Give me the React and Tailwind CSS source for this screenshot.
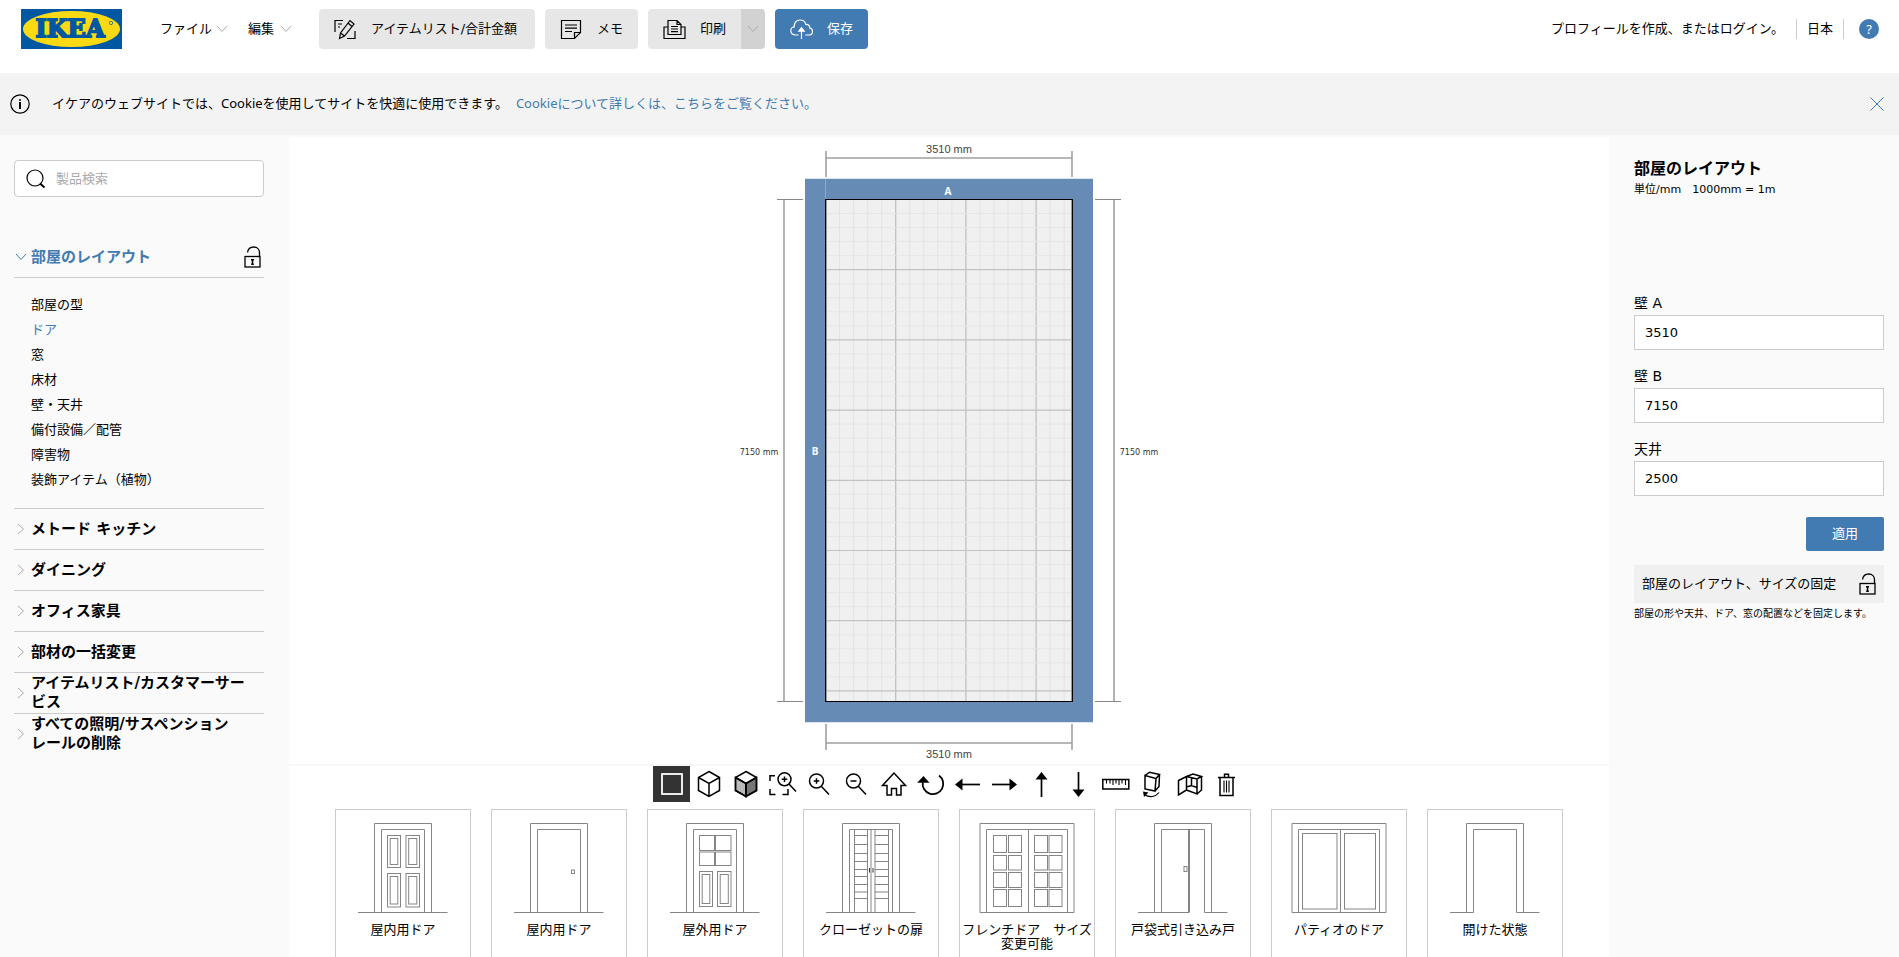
import React from 'react';

const BODY_FONT = "font-['DejaVu_Sans','Noto_Sans_CJK_JP',sans-serif]";

function Chevron({ dir = 'down', className = '' }) {
  const d = dir === 'down' ? 'M1 3 6 8.5 11 3' : 'M3 1 8.5 6 3 11';
  return (
    <svg viewBox="0 0 12 12" className={`size-3 shrink-0 ${className}`} fill="none" stroke="currentColor" aria-hidden="true">
      <path d={d} />
    </svg>
  );
}

function Logo() {
  return (
    <svg viewBox="0 0 101 40" className="h-10 w-[101px]" role="img" aria-label="IKEA">
      <rect width="101" height="40" fill="#0058a3" />
      <ellipse cx="50.500" cy="20" rx="48.500" ry="18" fill="#fbd914" />
      <text
        x="49"
        y="28"
        textAnchor="middle"
        fill="#0058a3"
        stroke="#0058a3"
        strokeWidth="1.800"
        className="font-['DejaVu_Serif',serif] text-[24px] font-bold"
      >
        IKEA
      </text>
      <circle cx="90" cy="14" r="1.700" fill="none" stroke="#0058a3" strokeWidth="0.700" />
    </svg>
  );
}

function Lock() {
  return (
    <svg viewBox="0 0 17 22" className="h-[22px] w-[17px] shrink-0" fill="none" stroke="#000" strokeWidth="1.300" aria-hidden="true">
      <rect x="1" y="10.500" width="15" height="10.500" />
      <path d="M3.500 6.500C4 3 6.500 1 9.700 1 13.200 1 15.500 3.500 15.500 6.500V10.500" />
      <path d="M8.500 13.200v5.300M7 13.700h3M7.200 18.300h2.600" strokeWidth="1.500" />
    </svg>
  );
}

const headerIcons = {
  list: (
    <>
      <path d="M1 13V1.500h8M4 5h4M4 8h2" />
      <path d="M5.500 19.500 6.500 14 16 1.500 20 5 10.500 17zM6.500 14l4 3M14 4l4 3.500" />
      <path d="M13 19.500h8V12" />
    </>
  ),
  memo: (
    <>
      <path d="M1.500 1.500h19v12l-6 6h-13z" />
      <path d="M14.500 19.500v-6h6M5 6h12M5 9.200h12M5 12.500h7" />
    </>
  ),
  print: (
    <>
      <path d="M5 8H1v11.500h21V8h-4" />
      <path d="M5 15.500V1.500h9l4 4v10zM14 1.500v4h4M8 7.500h7M8 10h7M8 12.700h7" />
    </>
  ),
  save: (
    <>
      <path d="M8.500 16H5.500C2.500 16 .8 14 .8 11.700S2.500 7.800 4.300 7.800C4 4 6.500 1 10 1c3 0 5.300 2 5.800 4.500 2.700-.3 4 1.300 3.900 3.300 1.600.4 2.800 1.600 2.800 3.400 0 2.300-1.500 3.800-3.700 3.800h-3.500" />
      <path d="M11.500 20V9.500M8.800 12.200l2.700-3.400 2.700 3.400z" fill="currentColor" />
    </>
  ),
};

function HeaderIcon({ name }) {
  return (
    <svg viewBox="0 0 23 21" className="h-[21px] w-[23px] shrink-0" fill="none" stroke="currentColor" strokeWidth="1.200" aria-hidden="true">
      {headerIcons[name]}
    </svg>
  );
}

function HeaderButton({ icon, label, className }) {
  return (
    <button type="button" className={`flex h-10 items-center gap-3.5 px-[15px] ${className}`}>
      <HeaderIcon name={icon} />
      {label}
    </button>
  );
}

function Header() {
  return (
    <header className="flex h-[73px] shrink-0 items-start bg-white pt-[9px] pr-5 pl-[21px] text-[13px]">
      <a href="#home">
        <Logo />
      </a>
      <nav className="ml-[38px] flex h-10 items-center gap-5">
        <button type="button" className="flex items-center gap-1">
          ファイル
          <Chevron className="text-[#aaa]" />
        </button>
        <button type="button" className="flex items-center gap-1.5">
          編集
          <Chevron className="text-[#aaa]" />
        </button>
      </nav>
      <div className="ml-[27px] flex gap-2.5">
        <HeaderButton icon="list" label="アイテムリスト/合計金額" className="min-w-[216px] rounded-sm bg-[#e7e7e7]" />
        <HeaderButton icon="memo" label="メモ" className="rounded-sm bg-[#e7e7e7]" />
        <div className="flex">
          <HeaderButton icon="print" label="印刷" className="rounded-l-sm bg-[#e7e7e7]" />
          <button type="button" aria-label="印刷オプション" className="grid w-6 place-items-center rounded-r-sm bg-[#d2d2d2] text-[#aaa]">
            <Chevron />
          </button>
        </div>
        <HeaderButton icon="save" label="保存" className="rounded-sm bg-[#427ab2] text-white" />
      </div>
      <div className="ml-auto flex h-10 items-center">
        <a href="#login">プロフィールを作成、またはログイン。</a>
        <a href="#country" className="ml-3 border-x border-[#ccc] px-2.5">
          日本
        </a>
        <button
          type="button"
          aria-label="ヘルプ"
          className="ml-[15px] grid size-5 place-items-center rounded-full bg-[#427ab2] font-['Noto_Sans',sans-serif] text-[13px] leading-5 text-white"
        >
          ?
        </button>
      </div>
    </header>
  );
}

function CookieBanner() {
  return (
    <div className="flex h-16 shrink-0 items-center border-b-2 border-[#fafafa] bg-[#f3f3f3] pr-[15px] pl-2.5 font-['Noto_Sans','Noto_Sans_CJK_JP',sans-serif] text-[13px]">
      <svg viewBox="0 0 20 20" className="size-5" fill="none" stroke="#000" strokeWidth="1.200" aria-hidden="true">
        <circle cx="10" cy="10" r="9.200" />
        <path d="M10 5.200v1.600M10 8v7" strokeWidth="1.900" />
      </svg>
      <p className="ml-[22px]">
        イケアのウェブサイトでは、Cookieを使用してサイトを快適に使用できます。
        <a href="#cookies" className="ml-2 text-[#427ab2]">
          Cookieについて詳しくは、こちらをご覧ください。
        </a>
      </p>
      <button type="button" aria-label="閉じる" className="ml-auto text-[#427ab2]">
        <svg viewBox="0 0 14 14" className="size-3.5" stroke="currentColor" aria-hidden="true">
          <path d="M.5.5l13 13M13.500.5l-13 13" />
        </svg>
      </button>
    </div>
  );
}

const roomItems = ['部屋の型', 'ドア', '窓', '床材', '壁・天井', '備付設備／配管', '障害物', '装飾アイテム（植物）'];
const categories = [
  'メトード キッチン',
  'ダイニング',
  'オフィス家具',
  '部材の一括変更',
  'アイテムリスト/カスタマーサービス',
  'すべての照明/サスペンション\nレールの削除',
];

function Sidebar() {
  return (
    <aside className="w-[289px] shrink-0 bg-[#fafafa] pt-[23px] pr-[25px] pl-3.5">
      <label className="flex h-[37px] items-center gap-2.5 rounded-sm border border-[#ccc] bg-white pl-[11px]">
        <svg viewBox="0 0 20 20" className="size-5 shrink-0" fill="none" stroke="#000" aria-hidden="true">
          <circle cx="9" cy="9" r="8" strokeWidth="1.200" />
          <path d="M14 14.500 18.500 18.500" strokeWidth="2" />
        </svg>
        <input type="text" aria-label="製品検索" placeholder="製品検索" className="min-w-0 flex-1 text-[13px] outline-none placeholder:text-[#aaa]" />
      </label>

      <div className="mt-10 flex h-[41px] items-center border-b border-[#ccc] pr-[3px] text-[#427ab2]">
        <Chevron className="ml-px" />
        <button type="button" className="ml-1 text-[15px] font-bold">
          部屋のレイアウト
        </button>
        <span className="ml-auto">
          <Lock />
        </span>
      </div>
      <ul className="pt-3.5 pb-4 pl-[17px] text-[13px] leading-[25px]">
        {roomItems.map((item) => (
          <li key={item}>
            <a href="#room" className={item === 'ドア' ? 'text-[#427ab2]' : ''}>
              {item}
            </a>
          </li>
        ))}
      </ul>
      <ul>
        {categories.map((item) => (
          <li key={item} className="h-[41px] border-t border-[#ccc]">
            <button type="button" className="flex h-full w-full items-center gap-1 pr-3 pl-px text-left text-[15px] leading-[19px] font-bold">
              <Chevron dir="right" className="text-[#aaa]" />
              <span className="whitespace-pre-line">{item}</span>
            </button>
          </li>
        ))}
      </ul>
    </aside>
  );
}

const range = (n) => Array.from({ length: n }, (_, i) => i + 1);

function FloorPlan() {
  const step = 14.04;
  const x0 = 86.5;
  const y0 = 59.5;
  return (
    <svg viewBox="0 0 420 624" className="h-[624px] w-[420px]" role="img" aria-label="部屋の平面図 3510 × 7150 mm">
      <rect x="66" y="38" width="288" height="545" fill="#dbe4ee" />
      <rect x="66" y="39" width="288" height="543" fill="#668cb5" />
      <path d="M86.500 39v20" stroke="#8ba8c8" />
      <rect x="86.500" y="59.500" width="247" height="502" fill="#f0f0f0" />
      <g fill="none">
        {range(17).map((i) => (
          <path key={`v${i}`} d={`M${x0 + i * step} 60V561`} stroke={i % 5 ? '#e3e3e3' : '#bdbdbd'} strokeWidth={i % 5 ? 1 : 1.2} />
        ))}
        {range(35).map((i) => (
          <path key={`h${i}`} d={`M87 ${y0 + i * step}H333`} stroke={i % 5 ? '#e6e6e6' : '#c2c2c2'} strokeWidth={i % 5 ? 1 : 1.2} />
        ))}
      </g>
      <rect x="86.500" y="59.500" width="247" height="502" fill="none" stroke="#000" />
      <path d="M87.500 60v501M332.500 60v501" stroke="#999" />
      <g stroke="#a0a0a0" strokeWidth="1.600" fill="none">
        <path d="M87 11v26M333 11v26M87 18h246" />
        <path d="M87 584v26M333 584v26M87 603h246" />
        <path d="M45 60v501M375 60v501" />
      </g>
      <path d="M38 59.500h26M38 561.500h26M356 59.500h26M356 561.500h26" stroke="#888" />
      <g className="font-['Liberation_Sans',sans-serif] text-[11px]" fill="#444" textAnchor="middle">
        <text x="210" y="13">3510 mm</text>
        <text x="210" y="618">3510 mm</text>
      </g>
      <g className="font-['DejaVu_Sans',sans-serif] text-[8px]" fill="#333" textAnchor="middle">
        <text x="20" y="315">7150 mm</text>
        <text x="400" y="315">7150 mm</text>
      </g>
      <g className="font-['Noto_Sans',sans-serif] text-[10px] font-bold" fill="#fff" textAnchor="middle">
        <text x="209" y="55">A</text>
        <text x="76" y="315">B</text>
      </g>
    </svg>
  );
}

const tools = [
  ['2D', <rect x="4" y="4" width="20" height="20" stroke="#fff" strokeWidth="1.800" />],
  [
    '3D ワイヤー',
    <path d="M14 1.500 24.500 7.500V20.500L14 26.500 3.500 20.500V7.500zM3.500 7.500 14 13.500 24.500 7.500M14 13.500V26.500" />,
  ],
  [
    '3D',
    <>
      <path d="M3.500 7.500 14 13.500V26.500L3.500 20.500z" fill="#bbb" />
      <path d="M24.500 7.500 14 13.500V26.500L24.500 20.500z" fill="#777" />
      <path d="M14 1.500 24.500 7.500V20.500L14 26.500 3.500 20.500V7.500zM3.500 7.500 14 13.500 24.500 7.500M14 13.500V26.500" />
    </>,
  ],
  [
    '範囲ズーム',
    <>
      <circle cx="15.500" cy="9.300" r="6.500" />
      <path d="M20 14 27 21.500M15.500 6.500v5.600M12.700 9.300h5.600M1 11V5.700h5M1 19v5.500h5.500M13.500 24.500h5.500V19" />
    </>,
  ],
  [
    'ズームイン',
    <>
      <circle cx="10.500" cy="11" r="7" />
      <path d="M15.500 16.500 23 24.500M10.500 8.200v5.600M7.700 11h5.600" />
    </>,
  ],
  [
    'ズームアウト',
    <>
      <circle cx="10.500" cy="11" r="7" />
      <path d="M15.500 16.500 23 24.500M7.500 11h6" />
    </>,
  ],
  ['ホーム', <path d="M14 3 2.500 15.500H7V25h4.500v-6.500h5V25H21V15.500h4.500z" />],
  [
    '回転',
    <>
      <path d="M22 5.500A10.300 10.300 0 1 1 5.800 12" strokeWidth="1.800" />
      <path d="M.2 12.700 6.500 6l6 6.700z" fill="#000" stroke="none" />
    </>,
  ],
  [
    '左へ',
    <>
      <path d="M8 14.500h18" strokeWidth="1.700" />
      <path d="M1 14.500 8.500 8.500v12z" fill="#000" stroke="none" />
    </>,
  ],
  [
    '右へ',
    <>
      <path d="M1 14.500H20" strokeWidth="1.700" />
      <path d="M26 14.500 18.500 8.500v12z" fill="#000" stroke="none" />
    </>,
  ],
  [
    '上へ',
    <>
      <path d="M13.500 8v19" strokeWidth="1.700" />
      <path d="M13.500 2 19.500 9.500h-12z" fill="#000" stroke="none" />
    </>,
  ],
  [
    '下へ',
    <>
      <path d="M13.500 2v19" strokeWidth="1.700" />
      <path d="M13.500 27 19.500 19.500h-12z" fill="#000" stroke="none" />
    </>,
  ],
  [
    '計測',
    <>
      <rect x="0.800" y="9.500" width="26" height="9.500" />
      <path d="M4.500 9.500v4M8 9.500v4M11 9.500v5.500M14 9.500v4M17 9.500v5.500M20 9.500v4M23.500 9.500v5.500" strokeWidth="1.100" />
    </>,
  ],
  [
    'アイテム回転',
    <>
      <path d="M6 5.500 17 8.500 16 21 6 19zM6 5.500 10.500 2.200 20.500 4.500 17 8.500M20.500 4.500 20 16.500 16 21" />
      <path d="M5.500 24.500c5 3.500 11 2.500 14.500-2" strokeWidth="1.200" />
      <path d="M4 21.500 9.500 22.500 5 27z" fill="#000" stroke="none" />
    </>,
  ],
  [
    '壁を開く',
    <>
      <path d="M2.500 10.500 10.500 6.500V20L2.500 25zM10.500 6.500 17 4 25.500 6.500 21 9 10.500 6.500M21 9V24L10.500 20M25.500 6.500V20L21 24M10.500 17l5-1.500L21 17.500M15.500 8v7.500" />
    </>,
  ],
  [
    '削除',
    <>
      <path d="M5 7.500h17M11.500 7V4.200h4V7M7 7.500h13V25.500H7z" />
      <path d="M11 10.500v12M13.500 10.500v12M16 10.500v12" strokeWidth="1.100" />
    </>,
  ],
];

function Toolbar() {
  return (
    <div className="flex h-[38px] shrink-0 justify-center border-t-2 border-[#f8f8f8]">
      {tools.map(([name, icon], i) => (
        <button
          key={name}
          type="button"
          aria-label={name}
          className={`grid h-9 w-[37px] place-items-center ${i === 0 ? 'bg-[#333]' : ''}`}
        >
          <svg viewBox="0 0 28 28" className="size-7" fill="none" stroke="#000" strokeWidth="1.500" aria-hidden="true">
            {icon}
          </svg>
        </button>
      ))}
    </div>
  );
}

function Rects({ items }) {
  return items.map(([x1, y1, x2, y2]) => (
    <rect key={`${x1}-${y1}`} x={x1} y={y1} width={x2 - x1} height={y2 - y1} />
  ));
}

const panel = (x1, y1, x2, y2) => [
  [x1, y1, x2, y2],
  [x1 + 2.7, y1 + 3, x2 - 2.7, y2 - 3],
];

const narrowFrame = <path d="M3 90.500H92.500M19.500 90.500V1.500H76.500V90.500M26.500 90.500V7.500H69.500V90.500" />;
const wideFrame = <path d="M1 90.500V1.500H95V90.500zM7.500 90.500V7.500H88.500V90.500M49.500 7.500V90.500" />;

const doors = [
  [
    '屋内用ドア',
    <>
      {narrowFrame}
      <Rects items={[...panel(32.5, 13.5, 45.5, 45.5), ...panel(51, 13.5, 64.5, 45.5), ...panel(32.5, 51.5, 45.5, 85), ...panel(51, 51.5, 64.5, 85)]} />
    </>,
  ],
  [
    '屋内用ドア',
    <>
      {narrowFrame}
      <rect x="60.500" y="48" width="3" height="3.500" />
    </>,
  ],
  [
    '屋外用ドア',
    <>
      {narrowFrame}
      <Rects
        items={[
          [32.5, 13.5, 47.5, 28.5],
          [48.5, 13.5, 64, 28.5],
          [32.5, 30, 47.5, 43.5],
          [48.5, 30, 64, 43.5],
          ...panel(32.5, 49.5, 45.5, 84.5),
          ...panel(50.5, 49.5, 64, 84.5),
        ]}
      />
    </>,
  ],
  [
    'クローゼットの扉',
    <>
      {narrowFrame}
      <path d="M31.500 7.500V90M44.500 7.500V90M48 7.500V90M52 7.500V90M65.500 7.500V90" />
      {[13.5, 22.5, 31.5, 39.5, 47.5, 54.5, 62.5, 70, 76.5].map((y) => (
        <path key={y} d={`M31.500 ${y}h13M52 ${y}h13.500`} />
      ))}
      <path d="M46.500 46v4.500M50 46v4.500" stroke="#333" />
    </>,
  ],
  [
    'フレンチドア　サイズ変更可能',
    <>
      {wideFrame}
      <Rects
        items={[14.5, 29.5, 55.5, 70].flatMap((x) =>
          [
            [13.5, 30.5],
            [33.5, 48],
            [50.5, 65.5],
            [67.5, 84.5],
          ].map(([a, b]) => [x, a, x + 13, b]),
        )}
      />
    </>,
  ],
  [
    '戸袋式引き込み戸',
    <>
      <path d="M3 90.500H54M69.500 90.500H92.500M19.500 90.500V1.500H76.500V90.500M26.500 90.500V7.500H69.500V90.500" />
      <path d="M54 7.500V90.500" strokeWidth="1.600" stroke="#666" />
      <rect x="49" y="44.500" width="3" height="5" />
    </>,
  ],
  [
    'パティオのドア',
    <>
      {wideFrame}
      <Rects
        items={[
          [11.5, 11.5, 46, 87],
          [53.5, 11.5, 84.5, 87],
        ]}
      />
    </>,
  ],
  [
    '開けた状態',
    <path d="M3 90.500H26.500V7.500H69.500V90.500H92.500M19.500 90.500V1.500H76.500V90.500" />,
  ],
];

function DoorCatalog() {
  return (
    <div className="flex min-h-0 flex-1 justify-center gap-5 overflow-hidden pt-[7px]">
      {doors.map(([name, drawing], i) => (
        <button
          key={i}
          type="button"
          className="flex h-[170px] w-[136px] shrink-0 flex-col items-center border border-[#ccc] bg-white pt-3 text-[13px] leading-3.5"
        >
          <svg viewBox="0 0 96 92" className="h-[92px] w-24" fill="none" stroke="#858585" aria-hidden="true">
            {drawing}
          </svg>
          <span className="mt-[9px]">{name}</span>
        </button>
      ))}
    </div>
  );
}

function Field({ id, label, value }) {
  return (
    <div className="mb-3.5">
      <label htmlFor={id} className="block text-sm leading-6">
        {label}
      </label>
      <input id={id} type="text" defaultValue={value} className="h-[35px] w-full border border-[#ccc] bg-white px-2.5 text-[13px] outline-none" />
    </div>
  );
}

function RoomPanel() {
  return (
    <aside className="w-[290px] shrink-0 bg-[#fafafa] pt-5 pr-[15px] pl-[25px]">
      <h1 className="text-base leading-6 font-bold">部屋のレイアウト</h1>
      <p className="text-[11px] leading-[18px]">単位/mm　1000mm = 1m</p>
      <form className="mt-[92px]">
        <Field id="wall-a" label="壁 A" value="3510" />
        <Field id="wall-b" label="壁 B" value="7150" />
        <Field id="ceiling" label="天井" value="2500" />
        <div className="flex justify-end pt-[7px]">
          <button type="button" className="h-[34px] w-[78px] rounded-xs bg-[#427ab2] text-[13px] text-white">
            適用
          </button>
        </div>
      </form>
      <button type="button" className="mt-3.5 flex h-[38px] w-full items-center justify-between bg-[#f0f0f0] px-2 text-[13px]">
        部屋のレイアウト、サイズの固定
        <Lock />
      </button>
      <p className="text-[10px] leading-[22px]">部屋の形や天井、ドア、窓の配置などを固定します。</p>
    </aside>
  );
}

export default function App() {
  return (
    <div lang="ja" className={`flex h-screen flex-col overflow-hidden bg-white text-black ${BODY_FONT}`}>
      <Header />
      <CookieBanner />
      <div className="flex min-h-0 flex-1">
        <Sidebar />
        <main className="flex min-w-0 flex-1 flex-col">
          <div className="flex shrink-0 justify-center pt-[3px]">
            <FloorPlan />
          </div>
          <Toolbar />
          <DoorCatalog />
        </main>
        <RoomPanel />
      </div>
    </div>
  );
}
